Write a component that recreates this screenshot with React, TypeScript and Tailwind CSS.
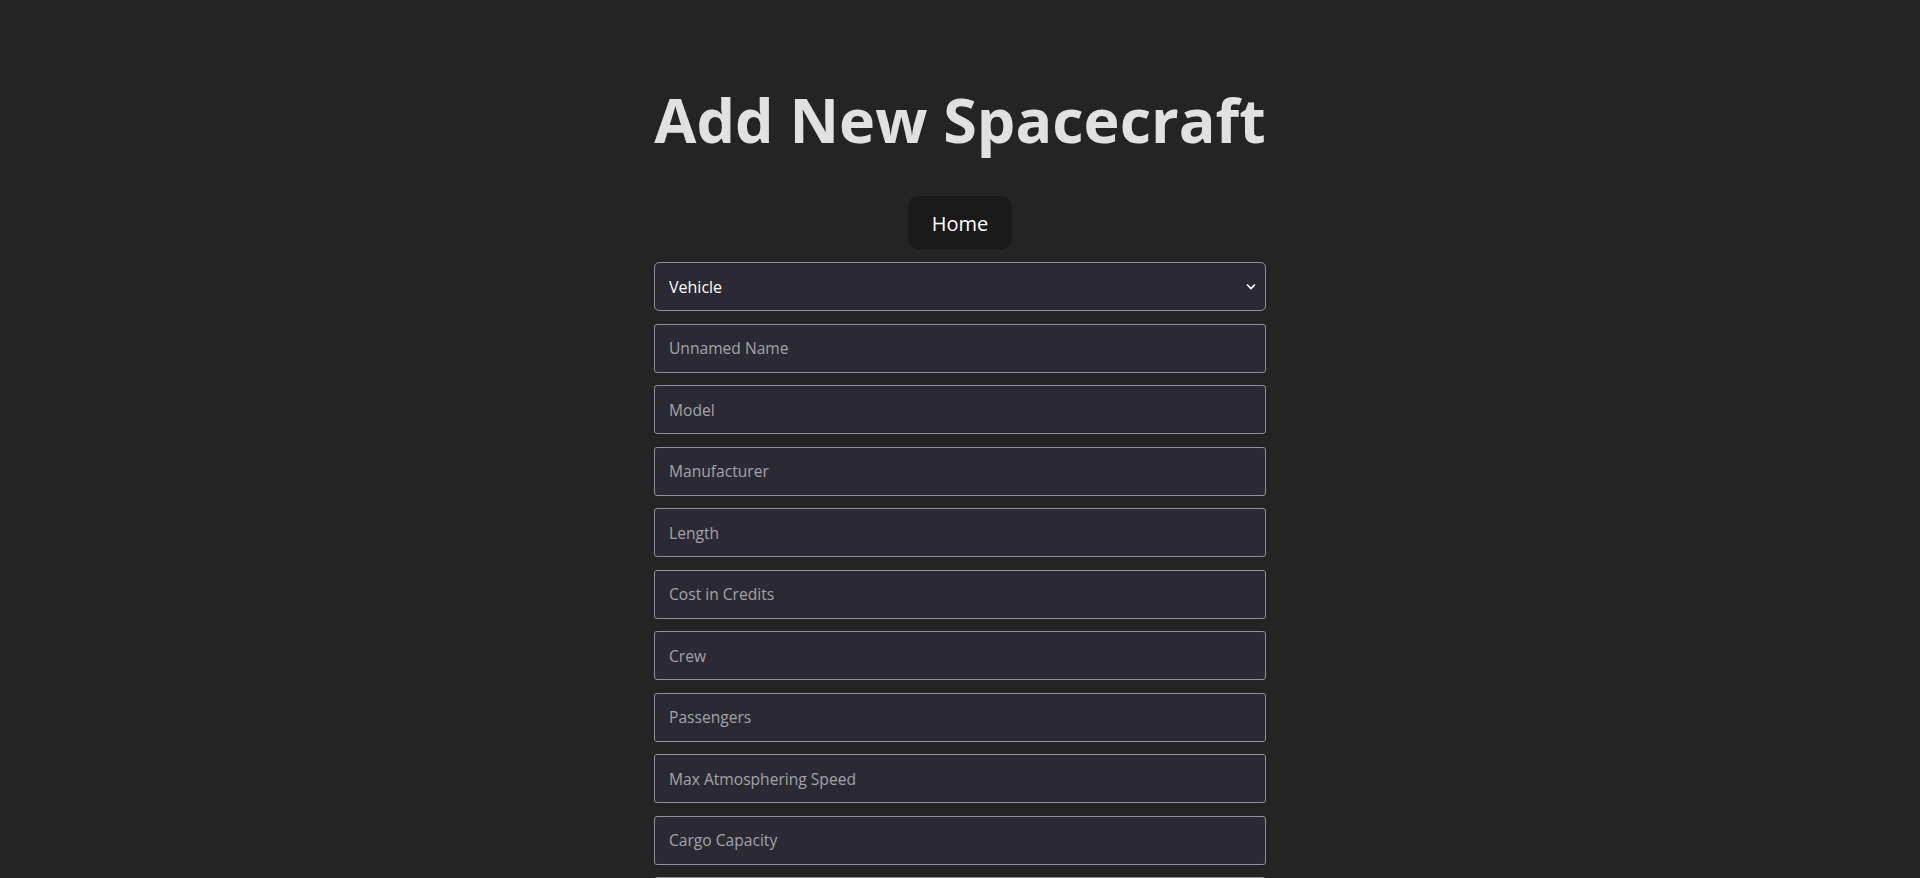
import { useState } from "react";

const fields = [
  "Unnamed Name",
  "Model",
  "Manufacturer",
  "Length",
  "Cost in Credits",
  "Crew",
  "Passengers",
  "Max Atmosphering Speed",
  "Cargo Capacity",
  "Consumables",
  "Vehicle Class",
];

const App = () => {
  const [kind, setKind] = useState("Vehicle");
  const [values, setValues] = useState<Record<string, string>>({});

  return (
    <div
      className="min-h-screen bg-[#242424] text-[#e1e1e1] flex flex-col items-center"
      style={{ fontFamily: '"Open Sans", "Noto Sans", sans-serif' }}
    >
      <h1 className="mt-[86px] text-[61px] leading-[68px] font-bold text-[#e1e1e1]">
        Add New Spacecraft
      </h1>

      <button className="mt-[42px] w-[104px] h-[53px] pt-[2px] rounded-[10px] bg-[#1a1a1a] text-[20px] text-white flex items-center justify-center">
        Home
      </button>

      <form className="mt-[13px] w-[612px] flex flex-col gap-[12.5px] pb-10">
        {/* Tipo */}
        <div className="relative">
          <select
            value={kind}
            onChange={(e) => setKind(e.target.value)}
            className="appearance-none w-full h-[49px] px-[14px] bg-[#2b2a33] border border-[#8f8f9d] rounded-[5px] text-[16px] text-white outline-none"
          >
            <option>Vehicle</option>
            <option>Starship</option>
          </select>
          <svg
            className="absolute right-[10px] top-[21px] pointer-events-none"
            width="10"
            height="7"
            viewBox="0 0 10 7"
          >
            <path d="M1 1.5 L5 5.5 L9 1.5" fill="none" stroke="white" strokeWidth="1.6" />
          </svg>
        </div>

        {/* Campos */}
        {fields.map((f) => (
          <input
            key={f}
            type="text"
            placeholder={f}
            value={values[f] || ""}
            onChange={(e) => setValues({ ...values, [f]: e.target.value })}
            className="w-full h-[49px] px-[14px] bg-[#2b2a33] border border-[#8f8f9d] rounded-[3px] text-[15.6px] text-white placeholder:text-[#a3a3ab] outline-none"
          />
        ))}
      </form>
    </div>
  );
};

export default App;
